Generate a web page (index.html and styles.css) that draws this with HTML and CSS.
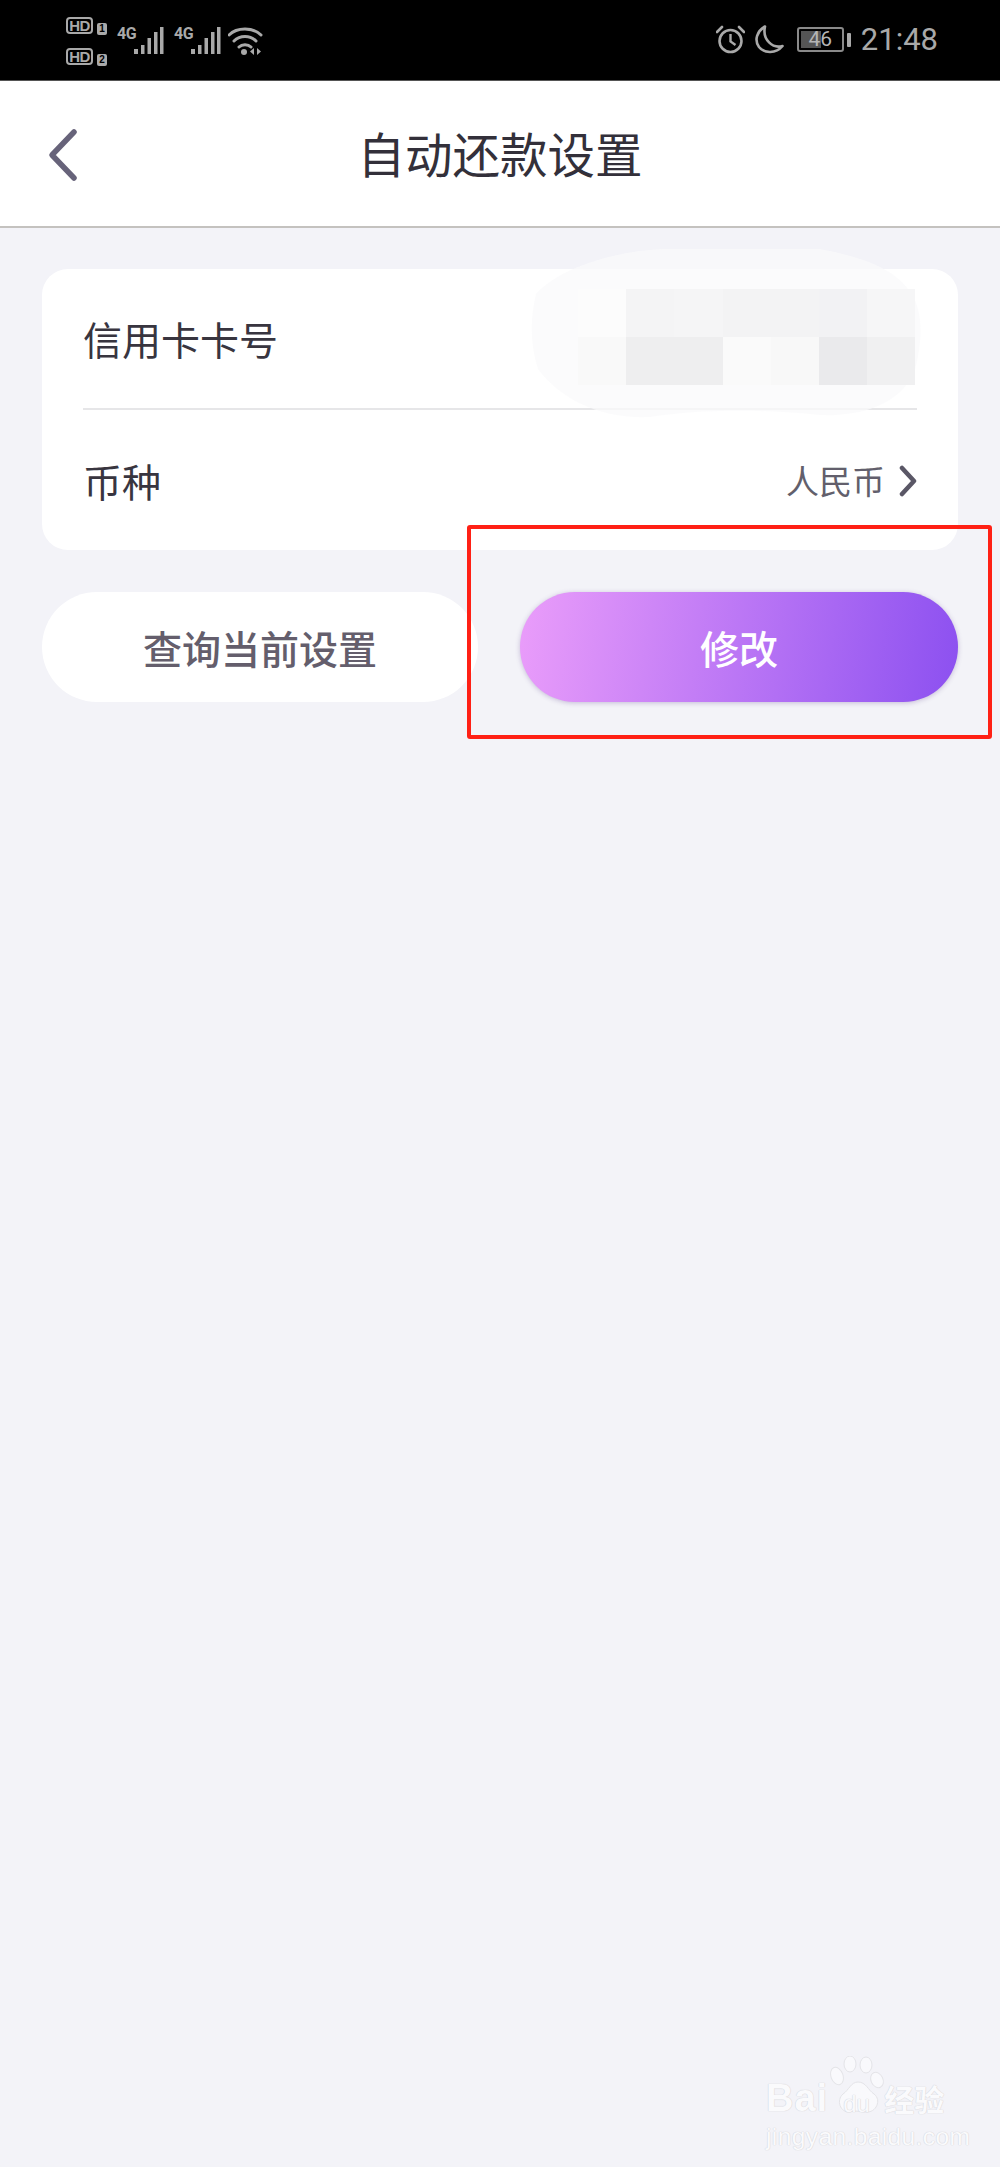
FILE: index.html
```html
<!DOCTYPE html>
<html>
<head>
<meta charset="utf-8">
<link rel="stylesheet" href="styles.css">
</head>

<body>
  <div id="status" class="border_box">
    <div class="hd_stack">
      <div class="hd_line"><span class="hd">HD</span><span class="sim">1</span></div>
      <div class="hd_line"><span class="hd">HD</span><span class="sim">2</span></div>
    </div>
    <div class="signal">
      <span class="net">4G</span>
      <svg width="30" height="27" viewBox="0 0 30 27"><path d="M0 22h4v5H0zM7 18h3.500v9H7zM13.500 11H17v16h-3.500zM20 5h3.500v22H20zM26 0h3.500v27H26z" fill="#a9a9a9"/></svg>
    </div>
    <div class="signal">
      <span class="net">4G</span>
      <svg width="30" height="27" viewBox="0 0 30 27"><path d="M0 22h4v5H0zM7 18h3.500v9H7zM13.500 11H17v16h-3.500zM20 5h3.500v22H20zM26 0h3.500v27H26z" fill="#a9a9a9"/></svg>
    </div>
    <svg class="wifi" width="35" height="28" viewBox="0 0 35 28">
      <path d="M1 8C9 0 25 0 33 8M6 14C12 8 22 8 28 14M11 20C14 17 20 17 23 20" fill="none" stroke="#a9a9a9" stroke-width="3" stroke-linecap="round"/>
      <circle cx="16" cy="25" r="3" fill="#a9a9a9"/>
      <path d="M26 21v7l-4-3.500zM29 21v7l4-3.500z" fill="#a9a9a9"/>
    </svg>

    <div class="status_right">
      <svg width="29" height="29" viewBox="0 0 29 29">
        <circle cx="14.500" cy="16" r="11" fill="none" stroke="#a9a9a9" stroke-width="2.600"/>
        <path d="M14.500 9v7.500l5 3.500" fill="none" stroke="#a9a9a9" stroke-width="2.400"/>
        <path d="M1 7l5-5M28 7l-5-5" stroke="#a9a9a9" stroke-width="2.600" stroke-linecap="round"/>
      </svg>
      <svg class="moon" width="30" height="29" viewBox="0 0 30 29">
        <path d="M11 1.500C3 6 0 15 5 22c5 6.500 17 7 23.500-1C19 24 8 15 11 1.500z" fill="none" stroke="#a9a9a9" stroke-width="2.600" stroke-linejoin="round"/>
      </svg>
      <div class="battery border_box">
        <div class="battery_fill"></div>
        <span class="battery_num">46</span>
      </div>
      <div class="battery_cap"></div>
      <span class="time">21:48</span>
    </div>
  </div>

  <div id="header" class="border_box">
    <svg class="back" width="32" height="54" viewBox="0 0 32 54">
      <path d="M27 4L5 27l22 23" fill="none" stroke="#67637a" stroke-width="5.500" stroke-linecap="round" stroke-linejoin="round"/>
    </svg>
    <span class="title">自动还款设置</span>
  </div>

  <div id="content" class="border_box">
    <div class="card">
      <div class="row row_line border_box">
        <span class="label">信用卡卡号</span>
      </div>
      <div class="row row_last border_box">
        <span class="label">币种</span>
        <div class="row_value">
          <span>人民币</span>
          <svg width="18" height="32" viewBox="0 0 18 32">
            <path d="M3 3l12 13L3 29" fill="none" stroke="#5a5766" stroke-width="4.500" stroke-linecap="round" stroke-linejoin="round"/>
          </svg>
        </div>
      </div>
    </div>

    <div class="actions">
      <div class="btn">查询当前设置</div>
      <div class="btn primary">修改</div>
    </div>
  </div>

  <!-- mosaic over the card number -->
  <div id="mosaic">
    <svg class="smear" width="400" height="170" viewBox="0 0 400 170">
      <path d="M6 45C30 18 90 0 140 0H290C320 6 360 15 378 40C395 60 392 95 385 120C375 150 340 168 290 166C230 160 170 160 120 168C70 170 30 150 8 120C0 95 0 70 6 45z" fill="#fafafb" fill-opacity="0.75"/>
    </svg>
    <div class="pixels">
      <i class="a1"></i><i class="a2"></i><i class="a3"></i><i class="a4"></i><i class="a4"></i><i class="a5"></i><i class="a6"></i>
      <i class="b1"></i><i class="b2"></i><i class="b2"></i><i class="b3"></i><i class="b4"></i><i class="b5"></i><i class="b6"></i>
    </div>
  </div>

  <div id="mark"></div>

  <div id="watermark">
    <div class="wm_top">
      <span class="wm_bai">Bai</span>
      <div class="wm_paw">
        <svg width="56" height="62" viewBox="0 0 56 62">
          <g fill="#f9f9fc" stroke="#e4e4e8" stroke-width="1">
            <ellipse cx="7" cy="20" rx="6" ry="9" transform="rotate(-20 7 20)"/>
            <ellipse cx="20" cy="8" rx="6" ry="8"/>
            <ellipse cx="36" cy="9" rx="6" ry="8"/>
            <ellipse cx="47" cy="24" rx="6" ry="8" transform="rotate(-25 47 24)"/>
            <path d="M28 26c8 0 10 8 16 12 8 6 2 19-8 18-5 0-10-2-16 0-10 1-14-12-7-18 6-4 8-12 15-12z"/>
          </g>
        </svg>
        <span class="wm_du">du</span>
      </div>
      <span class="wm_cn">经验</span>
    </div>
    <div class="wm_url">jingyan.baidu.com</div>
  </div>
</body>
</html>
```

FILE: styles.css
```css
html, body {
  margin: 0;
  padding: 0;
  background-color: #f3f3f8;
  color: #38353f;
  font-family: "Noto Sans CJK SC", "Noto Sans", sans-serif;
}

body {
  position: relative;
  width: 1000px;
  height: 2167px;
  overflow: hidden;
}

.border_box {
  box-sizing: border-box;
}

/* status bar */
#status {
  display: flex;
  align-items: flex-start;
  height: 81px;
  padding-left: 66px;
  background-color: #000;
  border-bottom: #555 1px solid;
}

.hd_stack {
  display: flex;
  flex-direction: column;
  gap: 14px;
  margin-top: 17px;
  width: 51px;
}

.hd_line {
  display: flex;
  align-items: flex-end;
  gap: 4px;
  height: 17px;
}

.hd {
  box-sizing: border-box;
  width: 27px;
  height: 17px;
  border: #a9a9a9 2px solid;
  border-radius: 4px;
  color: #a9a9a9;
  font-family: "Liberation Sans", sans-serif;
  font-size: 15px;
  font-weight: bold;
  line-height: 13px;
  letter-spacing: -0.5px;
  text-align: center;
}

.sim {
  width: 10px;
  height: 12px;
  margin-bottom: -1px;
  border-radius: 2px;
  background-color: #a9a9a9;
  color: #000;
  font-family: "Liberation Sans", sans-serif;
  font-size: 10px;
  font-weight: bold;
  line-height: 12px;
  text-align: center;
}

.signal {
  display: flex;
  align-items: flex-start;
  width: 57px;
  margin-top: 27px;
}

.net {
  width: 16px;
  color: #a9a9a9;
  font-family: "Roboto", sans-serif;
  font-size: 16px;
  font-weight: 700;
  line-height: 14px;
  letter-spacing: -0.5px;
}

.signal svg {
  margin-left: 1px;
}

.wifi {
  margin-top: 27px;
  margin-left: -3px;
}

.status_right {
  display: flex;
  align-items: center;
  height: 81px;
  margin-left: auto;
  margin-top: -1px;
  padding-right: 62px;
  color: #a9a9a9;
}

.moon {
  margin-left: 9px;
}

.battery {
  position: relative;
  width: 47px;
  height: 25px;
  margin-left: 13px;
  border: #8a8a8a 2px solid;
  border-radius: 3px;
}

.battery_fill {
  width: 20px;
  height: 17px;
  margin: 2px;
  background-color: #555;
}

.battery_num {
  position: absolute;
  top: 0;
  left: 0;
  width: 100%;
  color: #b5b5b5;
  font-family: "Roboto", sans-serif;
  font-size: 21px;
  line-height: 21px;
  text-align: center;
}

.battery_cap {
  width: 4px;
  height: 14px;
  margin-left: 3px;
  border-radius: 1px;
  background-color: #a9a9a9;
}

.time {
  margin-left: 10px;
  font-family: "Roboto", sans-serif;
  font-size: 31px;
}

/* title bar */
#header {
  position: relative;
  display: flex;
  align-items: center;
  justify-content: center;
  height: 147px;
  padding-bottom: 2px;
  background-color: #fff;
  border-bottom: #c4c2bf 2px solid;
}

.back {
  position: absolute;
  left: 47px;
  top: 47px;
}

.title {
  font-size: 47.500px;
  line-height: 60px;
  color: #33303a;
}

/* content */
#content {
  padding: 41px 42px 0;
}

.card {
  height: 281px;
  border-radius: 26px;
  background-color: #fff;
}

.row {
  display: flex;
  align-items: center;
  justify-content: space-between;
  height: 141px;
  margin: 0 41px;
  font-size: 39px;
}

.row_last {
  height: 140px;
}

.row_line {
  padding-bottom: 2px;
  border-bottom: #e6e6e8 2px solid;
}

.label {
  color: #38353f;
}

.row_value {
  display: flex;
  align-items: center;
  gap: 14px;
  color: #625f6c;
  font-size: 33px;
}

.row_value svg {
  margin-top: 2px;
}

.actions {
  display: flex;
  justify-content: space-between;
  margin-top: 42px;
}

.btn {
  width: 436px;
  height: 110px;
  border-radius: 55px;
  background-color: #fff;
  color: #645e6c;
  font-size: 39px;
  font-weight: 500;
  line-height: 110px;
  text-align: center;
}

.primary {
  width: 438px;
  background-image: linear-gradient(98deg, #ea9dfa 0%, #8c50f0 100%);
  box-shadow: 0 1px 5px 0 rgba(90,60,140,0.3);
  color: #fff;
}

/* things drawn over the screen */
#mosaic {
  position: absolute;
  left: 530px;
  top: 249px;
  width: 400px;
  height: 170px;
}

.smear {
  display: block;
}

.pixels {
  position: absolute;
  left: 48px;
  top: 40px;
  display: grid;
  grid-template-columns: repeat(7, 48.200px);
  grid-template-rows: repeat(2, 48px);
}

.pixels i {
  display: block;
}

.a1 { background-color: #fcfcfc; }
.a2 { background-color: #f4f4f5; }
.a3 { background-color: #f5f5f6; }
.a4 { background-color: #f3f3f4; }
.a5 { background-color: #f2f2f4; }
.a6 { background-color: #f6f6f7; }
.b1 { background-color: #f9f9f9; }
.b2 { background-color: #eeeeef; }
.b3 { background-color: #fafafa; }
.b4 { background-color: #f8f8f8; }
.b5 { background-color: #eaeaec; }
.b6 { background-color: #f0f0f1; }

#mark {
  position: absolute;
  left: 467px;
  top: 525px;
  width: 525px;
  height: 214px;
  box-sizing: border-box;
  border: #ff2015 4px solid;
  border-radius: 3px;
}

#watermark {
  position: absolute;
  left: 766px;
  top: 2060px;
  color: #fafafc;
  font-family: "Liberation Sans", sans-serif;
  text-shadow: 0 0 1px #d2d2d7, 0 0 1px #d2d2d7;
}

.wm_top {
  display: flex;
  align-items: flex-end;
  height: 58px;
}

.wm_bai {
  font-size: 38px;
  font-weight: bold;
  line-height: 40px;
  letter-spacing: 1px;
}

.wm_paw {
  position: relative;
  width: 54px;
  height: 58px;
  margin-left: 2px;
}

.wm_paw svg {
  display: block;
  margin-top: -4px;
}

.wm_du {
  position: absolute;
  left: 13px;
  bottom: 1px;
  color: #f9f9fc;
  font-size: 24px;
  line-height: 26px;
}

.wm_cn {
  margin-left: 0;
  font-family: "Noto Sans CJK SC", sans-serif;
  font-size: 30px;
  font-weight: 700;
  line-height: 40px;
}

.wm_url {
  margin-top: 5px;
  font-size: 24.500px;
  line-height: 28px;
  letter-spacing: 0.4px;
}
```
